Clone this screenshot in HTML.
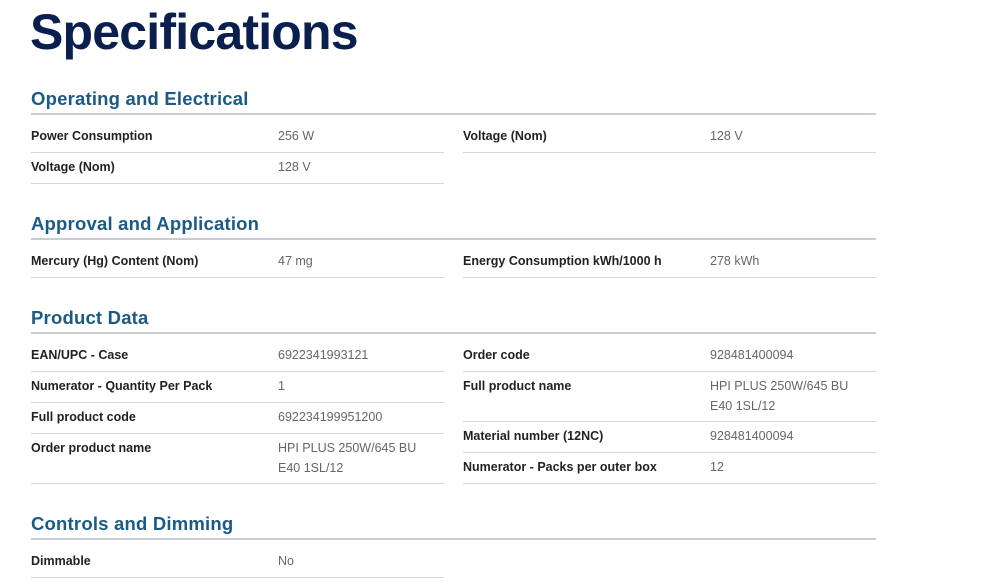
<!DOCTYPE html>
<html><head><meta charset="utf-8"><style>
body{margin:0;width:1000px;height:581px;background:#fff;position:relative;overflow:hidden;font-family:"Liberation Sans",sans-serif}
div{position:absolute;white-space:nowrap}
.t{left:30px;top:3px;font-size:50px;font-weight:bold;color:#0b1f4e;letter-spacing:-0.8px}
.h{left:31px;font-size:18.5px;font-weight:bold;color:#1b5a84;line-height:22px;letter-spacing:0.2px}
.hl{left:31px;width:845px;height:2px;background:#c9cdd2}
.l{font-size:12.5px;font-weight:bold;color:#222;line-height:20px}
.v{font-size:12.5px;color:#666;line-height:20px}
.rl{height:1px;background:#d6d9dc;width:413px}
</style></head><body>
<div class="t">Specifications</div>

<div class="h" style="top:88px">Operating and Electrical</div>
<div class="hl" style="top:113px"></div>
<div class="l" style="left:31px;top:126px">Power Consumption</div><div class="v" style="left:278px;top:126px">256 W</div>
<div class="rl" style="left:31px;top:152px"></div>
<div class="l" style="left:31px;top:157px">Voltage (Nom)</div><div class="v" style="left:278px;top:157px">128 V</div>
<div class="rl" style="left:31px;top:183px"></div>
<div class="l" style="left:463px;top:126px">Voltage (Nom)</div><div class="v" style="left:710px;top:126px">128 V</div>
<div class="rl" style="left:463px;top:152px"></div>

<div class="h" style="top:213px">Approval and Application</div>
<div class="hl" style="top:238px"></div>
<div class="l" style="left:31px;top:251px">Mercury (Hg) Content (Nom)</div><div class="v" style="left:278px;top:251px">47 mg</div>
<div class="rl" style="left:31px;top:277px"></div>
<div class="l" style="left:463px;top:251px">Energy Consumption kWh/1000 h</div><div class="v" style="left:710px;top:251px">278 kWh</div>
<div class="rl" style="left:463px;top:277px"></div>

<div class="h" style="top:307px">Product Data</div>
<div class="hl" style="top:332px"></div>
<div class="l" style="left:31px;top:345px">EAN/UPC - Case</div><div class="v" style="left:278px;top:345px">6922341993121</div>
<div class="rl" style="left:31px;top:371px"></div>
<div class="l" style="left:31px;top:376px">Numerator - Quantity Per Pack</div><div class="v" style="left:278px;top:376px">1</div>
<div class="rl" style="left:31px;top:402px"></div>
<div class="l" style="left:31px;top:407px">Full product code</div><div class="v" style="left:278px;top:407px">692234199951200</div>
<div class="rl" style="left:31px;top:433px"></div>
<div class="l" style="left:31px;top:438px">Order product name</div><div class="v" style="left:278px;top:438px">HPI PLUS 250W/645 BU<br>E40 1SL/12</div>
<div class="rl" style="left:31px;top:483px"></div>

<div class="l" style="left:463px;top:345px">Order code</div><div class="v" style="left:710px;top:345px">928481400094</div>
<div class="rl" style="left:463px;top:371px"></div>
<div class="l" style="left:463px;top:376px">Full product name</div><div class="v" style="left:710px;top:376px">HPI PLUS 250W/645 BU<br>E40 1SL/12</div>
<div class="rl" style="left:463px;top:421px"></div>
<div class="l" style="left:463px;top:426px">Material number (12NC)</div><div class="v" style="left:710px;top:426px">928481400094</div>
<div class="rl" style="left:463px;top:452px"></div>
<div class="l" style="left:463px;top:457px">Numerator - Packs per outer box</div><div class="v" style="left:710px;top:457px">12</div>
<div class="rl" style="left:463px;top:483px"></div>

<div class="h" style="top:513px">Controls and Dimming</div>
<div class="hl" style="top:538px"></div>
<div class="l" style="left:31px;top:551px">Dimmable</div><div class="v" style="left:278px;top:551px">No</div>
<div class="rl" style="left:31px;top:577px"></div>
</body></html>
